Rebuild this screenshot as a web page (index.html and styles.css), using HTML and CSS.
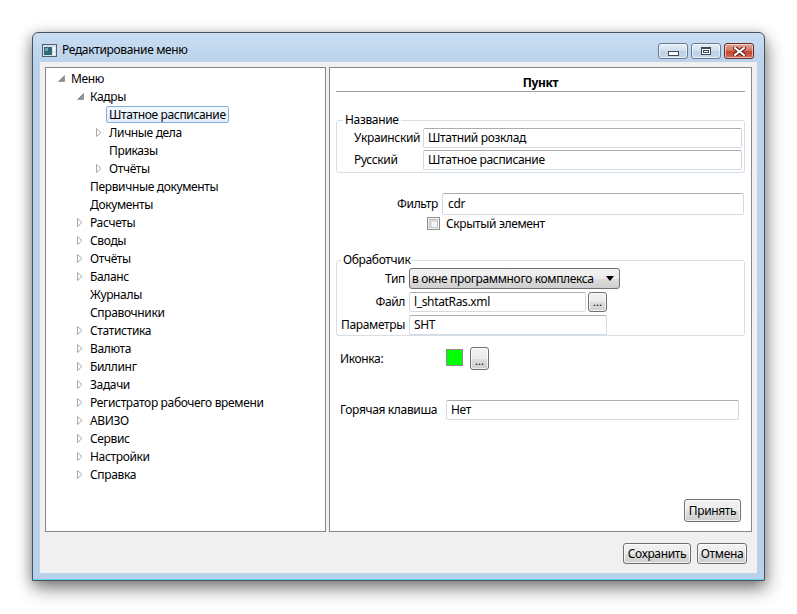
FILE: index.html
```html
<!DOCTYPE html>
<html lang="ru">
<head>
<meta charset="utf-8">
<title>Редактирование меню</title>
<link rel="stylesheet" href="styles.css">
</head>
<body>
<div class="window">
  <div class="titlebar">
    <svg class="app-icon" width="15" height="13" viewBox="0 0 15 13">
      <rect x="0.5" y="0.5" width="14" height="12" fill="#d9e1e8" stroke="#4f5f6c"/>
      <rect x="2" y="3" width="8" height="8" fill="#2e6a78"/>
      <rect x="3" y="4" width="3" height="3" fill="#6fa3ad"/>
      <rect x="11" y="3" width="2" height="4" fill="#ffffff"/>
      <rect x="11" y="9" width="2" height="2" fill="#ffffff"/>
    </svg>
    <span class="title">Редактирование меню</span>
    <div class="caption-buttons">
      <div class="cap cap-min"><span class="glyph-min"></span></div>
      <div class="cap cap-max"><span class="glyph-max"></span></div>
      <div class="cap cap-close">
        <svg width="13" height="9" viewBox="0 0 13 9">
          <path d="M2 1 L11 8 M11 1 L2 8" stroke="#5a1a12" stroke-width="4" stroke-linecap="square"/>
          <path d="M2 1 L11 8 M11 1 L2 8" stroke="#ffffff" stroke-width="2" stroke-linecap="square"/>
        </svg>
      </div>
    </div>
  </div>
  <div class="client">
    <div class="panes">
      <div class="tree">
        <div class="node l0"><span class="exp"><svg class="tri-open" width="7" height="7" viewBox="0 0 7 7"><path d="M6.5 0.5 L6.5 6.5 L0.5 6.5 Z" fill="#8e8e8e" stroke="#7a7a7a" stroke-width="0.6"/></svg></span><span class="label">Меню</span></div>
        <div class="node l1"><span class="exp"><svg class="tri-open" width="7" height="7" viewBox="0 0 7 7"><path d="M6.5 0.5 L6.5 6.5 L0.5 6.5 Z" fill="#8e8e8e" stroke="#7a7a7a" stroke-width="0.6"/></svg></span><span class="label">Кадры</span></div>
        <div class="node l2 selected"><span class="exp"></span><span class="label">Штатное расписание</span></div>
        <div class="node l2"><span class="exp"><svg width="6" height="9" viewBox="0 0 6 9"><path d="M0.5 0.5 L5 4.5 L0.5 8.5 Z" fill="#fff" stroke="#a8a8a8"/></svg></span><span class="label">Личные дела</span></div>
        <div class="node l2"><span class="exp"></span><span class="label">Приказы</span></div>
        <div class="node l2"><span class="exp"><svg width="6" height="9" viewBox="0 0 6 9"><path d="M0.5 0.5 L5 4.5 L0.5 8.5 Z" fill="#fff" stroke="#a8a8a8"/></svg></span><span class="label">Отчёты</span></div>
        <div class="node l1"><span class="exp"></span><span class="label">Первичные документы</span></div>
        <div class="node l1"><span class="exp"></span><span class="label">Документы</span></div>
        <div class="node l1"><span class="exp"><svg width="6" height="9" viewBox="0 0 6 9"><path d="M0.5 0.5 L5 4.5 L0.5 8.5 Z" fill="#fff" stroke="#a8a8a8"/></svg></span><span class="label">Расчеты</span></div>
        <div class="node l1"><span class="exp"><svg width="6" height="9" viewBox="0 0 6 9"><path d="M0.5 0.5 L5 4.5 L0.5 8.5 Z" fill="#fff" stroke="#a8a8a8"/></svg></span><span class="label">Своды</span></div>
        <div class="node l1"><span class="exp"><svg width="6" height="9" viewBox="0 0 6 9"><path d="M0.5 0.5 L5 4.5 L0.5 8.5 Z" fill="#fff" stroke="#a8a8a8"/></svg></span><span class="label">Отчёты</span></div>
        <div class="node l1"><span class="exp"><svg width="6" height="9" viewBox="0 0 6 9"><path d="M0.5 0.5 L5 4.5 L0.5 8.5 Z" fill="#fff" stroke="#a8a8a8"/></svg></span><span class="label">Баланс</span></div>
        <div class="node l1"><span class="exp"></span><span class="label">Журналы</span></div>
        <div class="node l1"><span class="exp"></span><span class="label">Справочники</span></div>
        <div class="node l1"><span class="exp"><svg width="6" height="9" viewBox="0 0 6 9"><path d="M0.5 0.5 L5 4.5 L0.5 8.5 Z" fill="#fff" stroke="#a8a8a8"/></svg></span><span class="label">Статистика</span></div>
        <div class="node l1"><span class="exp"><svg width="6" height="9" viewBox="0 0 6 9"><path d="M0.5 0.5 L5 4.5 L0.5 8.5 Z" fill="#fff" stroke="#a8a8a8"/></svg></span><span class="label">Валюта</span></div>
        <div class="node l1"><span class="exp"><svg width="6" height="9" viewBox="0 0 6 9"><path d="M0.5 0.5 L5 4.5 L0.5 8.5 Z" fill="#fff" stroke="#a8a8a8"/></svg></span><span class="label">Биллинг</span></div>
        <div class="node l1"><span class="exp"><svg width="6" height="9" viewBox="0 0 6 9"><path d="M0.5 0.5 L5 4.5 L0.5 8.5 Z" fill="#fff" stroke="#a8a8a8"/></svg></span><span class="label">Задачи</span></div>
        <div class="node l1"><span class="exp"><svg width="6" height="9" viewBox="0 0 6 9"><path d="M0.5 0.5 L5 4.5 L0.5 8.5 Z" fill="#fff" stroke="#a8a8a8"/></svg></span><span class="label">Регистратор рабочего времени</span></div>
        <div class="node l1"><span class="exp"><svg width="6" height="9" viewBox="0 0 6 9"><path d="M0.5 0.5 L5 4.5 L0.5 8.5 Z" fill="#fff" stroke="#a8a8a8"/></svg></span><span class="label">АВИЗО</span></div>
        <div class="node l1"><span class="exp"><svg width="6" height="9" viewBox="0 0 6 9"><path d="M0.5 0.5 L5 4.5 L0.5 8.5 Z" fill="#fff" stroke="#a8a8a8"/></svg></span><span class="label">Сервис</span></div>
        <div class="node l1"><span class="exp"><svg width="6" height="9" viewBox="0 0 6 9"><path d="M0.5 0.5 L5 4.5 L0.5 8.5 Z" fill="#fff" stroke="#a8a8a8"/></svg></span><span class="label">Настройки</span></div>
        <div class="node l1"><span class="exp"><svg width="6" height="9" viewBox="0 0 6 9"><path d="M0.5 0.5 L5 4.5 L0.5 8.5 Z" fill="#fff" stroke="#a8a8a8"/></svg></span><span class="label">Справка</span></div>
      </div>

      <div class="editor">
        <div class="editor-header">Пункт</div>

        <fieldset class="group group-name">
          <legend>Название</legend>
          <div class="name-grid">
            <span class="lbl">Украинский</span><div class="input">Штатний розклад</div>
            <span class="lbl">Русский</span><div class="input">Штатное расписание</div>
          </div>
        </fieldset>

        <div class="filter-row">
          <span class="lbl lbl-right">Фильтр</span>
          <div class="input input-filter">cdr</div>
        </div>

        <div class="check-row">
          <span class="checkbox"></span>
          <span class="check-label">Скрытый элемент</span>
        </div>

        <fieldset class="group group-handler">
          <legend>Обработчик</legend>
          <div class="handler-grid">
            <span class="lbl lbl-right">Тип</span>
            <div class="combo"><span>в окне программного комплекса</span><svg width="8" height="5" viewBox="0 0 8 5"><path d="M0 0 L8 0 L4 5 Z" fill="#000"/></svg></div>
            <span class="lbl lbl-right">Файл</span>
            <div class="file-cell"><div class="input input-file">l_shtatRas.xml</div><button class="btn btn-dots">...</button></div>
            <span class="lbl lbl-right">Параметры</span>
            <div class="input input-params">SHT</div>
          </div>
        </fieldset>

        <div class="icon-row">
          <span class="lbl lbl-wide">Иконка:</span>
          <span class="swatch"></span>
          <button class="btn btn-icon">...</button>
        </div>

        <div class="hotkey-row">
          <span class="lbl lbl-wide">Горячая клавиша</span>
          <div class="input input-hotkey">Нет</div>
        </div>

        <button class="btn btn-apply">Принять</button>
      </div>
    </div>
    <div class="footer">
      <button class="btn btn-save">Сохранить</button>
      <button class="btn btn-cancel">Отмена</button>
    </div>
  </div>
</div>
</body>
</html>
```

FILE: styles.css
```css
* { box-sizing: border-box; }
html, body { margin: 0; padding: 0; }
body {
  background: #ffffff;
  width: 797px;
  height: 614px;
  overflow: hidden;
  font-family: "Noto Sans", "Open Sans", sans-serif;
  font-size: 12px;
  letter-spacing: -0.35px;
  color: #000;
}

.window {
  margin: 32px 0 0 32px;
  width: 733px;
  height: 549px;
  border: 1px solid #48535f;
  border-radius: 6px 6px 0 0;
  background: linear-gradient(#c9def3, #bad2ea 30px, #b9d1ea);
  box-shadow: inset 0 -1px 0 #62d6ef, 2px 8px 18px rgba(0,0,0,0.45), -2px 2px 12px rgba(0,0,0,0.22);
  display: flex;
  flex-direction: column;
  padding-bottom: 7px;
}

.titlebar {
  height: 29px;
  display: flex;
  align-items: flex-start;
  padding: 0 10px 0 9px;
}
.app-icon { margin-top: 11px; flex: none; }
.title {
  margin: 9px 0 0 5px;
  line-height: 16px;
  font-size: 12px;
  flex: 1;
}
.caption-buttons {
  display: flex;
  gap: 3px;
  margin-top: 10px;
}
.cap {
  width: 30px;
  height: 16px;
  border: 1px solid #6a7c91;
  border-radius: 3px;
  background: linear-gradient(#e6eef8, #d3e0ee 45%, #bccfe4 55%, #c9d9ec);
  box-shadow: inset 0 0 0 1px rgba(255,255,255,0.55);
  display: flex;
  align-items: center;
  justify-content: center;
}
.glyph-min {
  width: 11px;
  height: 5px;
  margin-top: 4px;
  background: #fff;
  border: 1px solid #3d4a5a;
}
.glyph-max {
  width: 10px;
  height: 8px;
  background: #fff;
  border: 1px solid #3d4a5a;
  box-shadow: inset 0 0 0 1px #fff, inset 0 0 0 2px #3d4a5a;
  border-top-width: 2px;
}
.cap-close {
  border-color: #6b2a22;
  background: linear-gradient(#e4a397, #d37764 45%, #c2442f 55%, #d0705c);
}

.client {
  height: 511px;
  margin: 0 7px;
  background: #f0f0f0;
  padding: 5px 5px 0;
  display: flex;
  flex-direction: column;
}
.panes {
  display: flex;
  gap: 3px;
  height: 465px;
}

/* tree */
.tree {
  width: 281px;
  flex: none;
  background: #fff;
  border: 1px solid #828790;
  padding-top: 1px;
}
.node {
  display: flex;
  align-items: center;
  height: 18px;
  white-space: nowrap;
}
.node.l0 { padding-left: 12px; }
.node.l1 { padding-left: 31px; }
.node.l2 { padding-left: 50px; }
.exp {
  width: 10px;
  height: 18px;
  flex: none;
  display: flex;
  align-items: center;
}
.tri-open { margin-top: 1px; }
.label {
  border: 1px solid transparent;
  border-radius: 2px;
  padding: 0 2px;
  line-height: 15px;
}
.node.selected .label {
  border-color: #84acdd;
  background: linear-gradient(#f4f9fe, #e3effc);
}

/* editor */
.editor {
  flex: 1;
  background: #fff;
  border: 1px solid #828790;
  padding: 0 6px 9px 6px;
  display: flex;
  flex-direction: column;
}
.editor-header {
  padding-top: 7px;
  line-height: 16px;
  text-align: center;
  font-weight: bold;
  border-bottom: 1px solid #a0a0a0;
}

.group {
  margin: 0;
  border: 1px solid #d5dfe5;
  border-radius: 3px;
  min-width: 0;
}
.group legend {
  padding: 0 2px;
  line-height: 16px;
}
.group-name {
  margin-top: 20px;
  padding: 0 2px 2px 17px;
}
.group-name legend { margin-left: -11px; }
.name-grid {
  display: grid;
  grid-template-columns: 69px 1fr;
  grid-auto-rows: 20px;
  row-gap: 2px;
  align-items: center;
}

.lbl { white-space: nowrap; line-height: 16px; }
.lbl-right { text-align: right; }

.input {
  height: 20px;
  border: 1px solid #d5d9e0;
  border-top-color: #abadb3;
  border-radius: 2px;
  background: #fff;
  padding: 0 4px;
  line-height: 18px;
  white-space: nowrap;
  overflow: hidden;
}

.filter-row {
  margin-top: 20px;
  display: grid;
  grid-template-columns: 102px 1fr;
  column-gap: 4px;
  align-items: center;
  margin-right: 1px;
}
.input-filter { height: 22px; line-height: 20px; padding-left: 5px; }

.check-row {
  margin-top: 2px;
  display: flex;
  align-items: center;
  height: 13px;
  padding-left: 91px;
}
.checkbox {
  width: 13px;
  height: 13px;
  border: 1px solid #8e8f8f;
  background: #f4f4f4;
  box-shadow: inset 0 0 0 1px #f4f4f4, inset 0 0 0 2px #c3c3c3, inset 1px 1px 0 3px #dcdcdc;
  flex: none;
}
.check-label { margin-left: 6px; line-height: 16px; }

.group-handler {
  margin-top: 22px;
  padding: 0;
}
.group-handler legend { margin-left: 4px; }
.handler-grid {
  display: grid;
  grid-template-columns: 67px auto;
  grid-template-rows: 21px 20px 20px;
  row-gap: 3px;
  column-gap: 4px;
  align-items: center;
  justify-content: start;
  padding-left: 1px;
}
.combo {
  width: 211px;
  height: 21px;
  border: 1px solid #707070;
  border-radius: 3px;
  background: linear-gradient(#f2f2f2, #ebebeb 50%, #dddddd 51%, #cfcfcf);
  display: flex;
  align-items: center;
  justify-content: space-between;
  padding: 0 5px 0 2px;
  white-space: nowrap;
}
.file-cell { display: flex; gap: 2px; }
.input-file { width: 177px; }
.input-params { width: 198px; }

.btn {
  font-family: inherit;
  font-size: 12px;
  letter-spacing: -0.35px;
  color: #000;
  border: 1px solid #707070;
  border-radius: 3px;
  background: linear-gradient(#f2f2f2, #ebebeb 50%, #dddddd 51%, #cfcfcf);
  box-shadow: inset 0 0 0 1px rgba(255,255,255,0.7);
  padding: 0;
  margin: 0;
  line-height: 16px;
}
.btn-dots {
  width: 19px;
  height: 20px;
  line-height: 12px;
  font-size: 11px;
  letter-spacing: 0;
}

.icon-row {
  margin-top: 11px;
  display: flex;
  align-items: center;
  height: 23px;
  padding-left: 4px;
}
.lbl-wide { width: 106px; flex: none; }
.swatch {
  width: 17px;
  height: 17px;
  background: #00ff00;
  border: 1px solid #8c8c8c;
  margin-top: -2px;
}
.btn-icon {
  width: 19px;
  height: 23px;
  margin-left: 7px;
  line-height: 14px;
  font-size: 11px;
  letter-spacing: 0;
  padding-top: 4px;
}

.hotkey-row {
  margin-top: 30px;
  display: flex;
  align-items: center;
  padding-left: 4px;
}
.input-hotkey { width: 293px; }

.btn-apply {
  margin-top: auto;
  align-self: flex-end;
  margin-right: 4px;
  width: 57px;
  height: 23px;
}

.footer {
  display: flex;
  justify-content: flex-end;
  gap: 6px;
  padding: 11px 5px 0 0;
}
.btn-save { width: 68px; height: 21px; }
.btn-cancel { width: 50px; height: 21px; }
```
